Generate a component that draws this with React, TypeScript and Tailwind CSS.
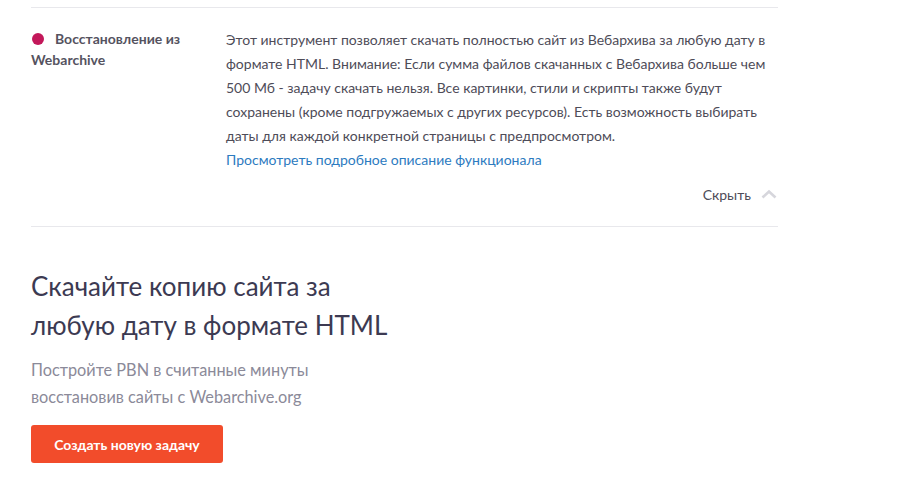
export default function App() {
  return (
    <div className="w-[901px] h-[491px] bg-white overflow-hidden font-['Lato','Noto_Sans',sans-serif]">
      <div className="ml-[31px] w-[747px]">
        <div className="h-[8px] border-b border-[#e8e8ec]" />

        {/* Row */}
        <div className="flex pt-[20px]">
          <div className="w-[195px] shrink-0 text-[14px] leading-[21px] font-bold text-[#55535f]">
            <span className="inline-block w-[12px] h-[12px] rounded-full bg-[#c3185a] mr-[11px] ml-[1px] align-[-1px]" />
            Восстановление из Webarchive
          </div>
          <div className="flex-1 text-[14px] leading-[24px] text-[#4e4c58]">
            <p>
              Этот инструмент позволяет скачать полностью сайт из Вебархива за любую дату в формате HTML. Внимание: Если сумма файлов скачанных с Вебархива больше чем 500 Мб - задачу скачать нельзя. Все картинки, стили и скрипты также будут сохранены (кроме подгружаемых с других ресурсов). Есть возможность выбирать даты для каждой конкретной страницы с предпросмотром.
            </p>
            <a className="text-[#2d7bbf]">Просмотреть подробное описание функционала</a>
          </div>
        </div>

        <div className="flex justify-end items-center h-[24px] mt-[10px] text-[14px] text-[#4e4c58]">
          <span>Скрыть</span>
          <svg width="16" height="10" viewBox="0 0 16 10" className="ml-[10px] mr-[1px]">
            <path d="M1.5 8.5 L8 2.5 L14.5 8.5" fill="none" stroke="#d6d6dc" strokeWidth="2.6" />
          </svg>
        </div>
        <div className="border-b border-[#e8e8ec] mt-[20px]" />

        {/* Promo */}
        <h2 className="mt-[40px] text-[26px] leading-[39px] text-[#3c3a52] w-[360px]">
          Скачайте копию сайта за любую дату в формате HTML
        </h2>
        <p className="mt-[11px] text-[16.3px] leading-[27px] text-[#8b8a99] w-[330px]">
          Постройте PBN в считанные минуты восстановив сайты с Webarchive.org
        </p>
        <button className="mt-[15px] w-[192px] h-[38px] rounded-[3px] bg-[#f24c2b] text-white text-[14px] font-bold">
          Создать новую задачу
        </button>
      </div>
    </div>
  );
}
